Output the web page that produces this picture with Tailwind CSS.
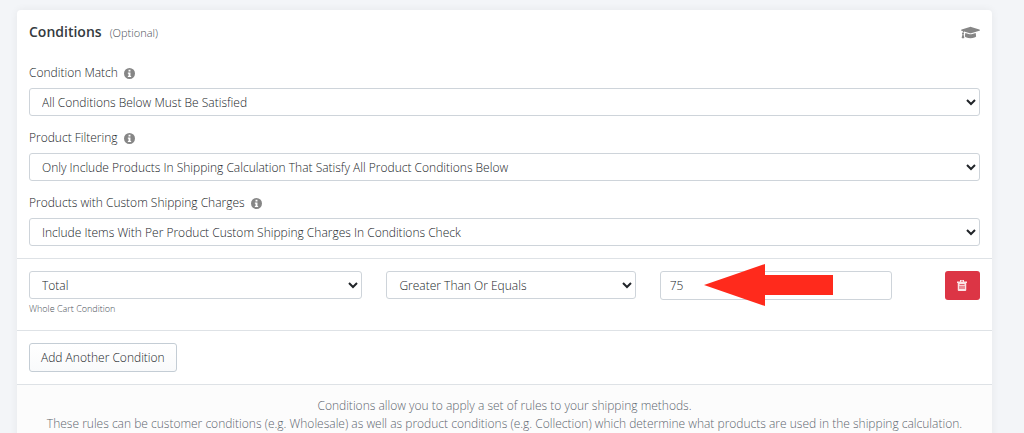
<!DOCTYPE html>
<html lang="en">
  <head>
    <meta charset="UTF-8" />
    <meta name="viewport" content="width=device-width, initial-scale=1.0" />
    <title>Shipping Rate - Conditions</title>
    <script src="https://cdn.jsdelivr.net/npm/@tailwindcss/browser@4"></script>
  </head>
  <body class="bg-[#f3f5f8] font-['Open_Sans','Noto_Sans',sans-serif] font-light text-[12px] leading-[18px] text-[#212529] overflow-hidden">
    <main class="pt-[10px] pl-[17px] pr-8">
      <section class="bg-white rounded-t shadow-[0_0_8px_rgba(0,0,0,0.06)]">
        <!-- Header -->
        <header class="flex items-center justify-between px-3 pt-3">
          <div class="flex items-baseline gap-2">
            <h2 class="text-[14px] leading-5 font-semibold text-[#343a40]">Conditions</h2>
            <span class="text-[11px] text-[#495057]">(Optional)</span>
          </div>
          <a href="#" aria-label="Documentation" class="text-[#868686]">
            <svg class="w-[19px] h-[15px]" viewBox="0 0 640 512" fill="currentColor" aria-hidden="true">
              <path d="M622 153 343 67a80 80 0 0 0-46 0L18 153c-24 7-24 39 0 46l49 15c-11 13-17 29-18 47a32 32 0 0 0-3 53L20 428c-2 10 6 20 16 20h56c10 0 18-10 16-20L82 314a32 32 0 0 0-1-52c1-16 9-29 22-38l194 60c11 3 28 6 46 0l279-85c24-7 24-39 0-46zM353 315c-28 8-51 4-66 0l-145-45-14 114c0 35 86 64 192 64s192-29 192-64l-14-114z" />
            </svg>
          </a>
        </header>

        <!-- Match settings -->
        <div class="flex flex-col gap-[13px] px-3 pt-[22px] pb-3">
          <div>
            <div class="flex items-center gap-[6px] mb-[6px]">
              <label for="condition-match">Condition Match</label>
              <svg class="w-[11px] h-[11px] text-[#868686]" viewBox="0 0 16 16" fill="currentColor" aria-hidden="true">
                <path fill-rule="evenodd" d="M8 0a8 8 0 1 1 0 16A8 8 0 0 1 8 0zM6.6 2.6v2.6h2.8V2.6zM5.6 6.6v1.6h1v3.4h-1v1.6h4.8v-1.6h-1v-5z" />
              </svg>
            </div>
            <select id="condition-match" class="block w-full h-7 px-2 bg-white border border-[#ced4da] rounded-[3px]">
              <option>All Conditions Below Must Be Satisfied</option>
            </select>
          </div>
          <div>
            <div class="flex items-center gap-[6px] mb-[6px]">
              <label for="product-filtering">Product Filtering</label>
              <svg class="w-[11px] h-[11px] text-[#868686]" viewBox="0 0 16 16" fill="currentColor" aria-hidden="true">
                <path fill-rule="evenodd" d="M8 0a8 8 0 1 1 0 16A8 8 0 0 1 8 0zM6.6 2.6v2.6h2.8V2.6zM5.6 6.6v1.6h1v3.4h-1v1.6h4.8v-1.6h-1v-5z" />
              </svg>
            </div>
            <select id="product-filtering" class="block w-full h-7 px-2 bg-white border border-[#ced4da] rounded-[3px]">
              <option>Only Include Products In Shipping Calculation That Satisfy All Product Conditions Below</option>
            </select>
          </div>
          <div>
            <div class="flex items-center gap-[6px] mb-[6px]">
              <label for="custom-charges">Products with Custom Shipping Charges</label>
              <svg class="w-[11px] h-[11px] text-[#868686]" viewBox="0 0 16 16" fill="currentColor" aria-hidden="true">
                <path fill-rule="evenodd" d="M8 0a8 8 0 1 1 0 16A8 8 0 0 1 8 0zM6.6 2.6v2.6h2.8V2.6zM5.6 6.6v1.6h1v3.4h-1v1.6h4.8v-1.6h-1v-5z" />
              </svg>
            </div>
            <select id="custom-charges" class="block w-full h-7 px-2 bg-white border border-[#ced4da] rounded-[3px]">
              <option>Include Items With Per Product Custom Shipping Charges In Conditions Check</option>
            </select>
          </div>
        </div>

        <!-- Condition row -->
        <div class="grid grid-cols-[333fr_249fr_232fr_64px] gap-6 items-start px-3 pt-3 pb-3 border-t border-[#dee2e6]">
          <div>
            <select id="condition-type" aria-label="Condition" aria-describedby="condition-help" class="block w-full h-7 px-2 bg-white border border-[#ced4da] rounded-[3px]">
              <option>Total</option>
            </select>
            <p id="condition-help" class="pt-px text-[9px] text-[#495057]">Whole Cart Condition</p>
          </div>
          <select aria-label="Operator" class="block w-full h-7 px-2 bg-white border border-[#ced4da] rounded-[3px]">
            <option>Greater Than Or Equals</option>
          </select>
          <div class="relative">
            <input type="text" value="75" aria-label="Value" class="block w-full h-[29px] px-[9px] bg-white border border-[#ced4da] rounded-[3px]" />
            <!-- Arrow pointing at the value -->
            <svg class="absolute left-11 -top-[7px] w-[129px] h-[42px] pointer-events-none" viewBox="0 0 129 42" fill="#ff2a1c" aria-hidden="true">
              <path d="M0 21 61 0v11h68v20H61v11z" />
            </svg>
          </div>
          <button type="button" aria-label="Delete condition" class="justify-self-end flex items-center justify-center w-[35px] h-[29px] bg-[#dc3545] rounded-[3px] text-[#fbe3e5]">
            <svg class="w-[10px] h-[11px]" viewBox="0 0 20 22" fill="currentColor" aria-hidden="true">
              <path fill-rule="evenodd" d="M6 0h8v3h6v3h-1.500v14a2 2 0 0 1-2 2h-13a2 2 0 0 1-2-2V6H0V3h6zM8 1.600V3h4V1.600zM5 8v1.600h10V8zM5 11.500V18h2v-6.500zM9 11.500V18h2v-6.500zM13 11.500V18h2v-6.500z" />
            </svg>
          </button>
        </div>

        <div class="px-3 py-3 border-t border-[#dee2e6]">
          <button type="button" class="block h-[29px] px-[11px] bg-linear-to-b from-white to-[#f9fafb] border border-[#c4cdd5] rounded-[3px] text-[#212529]">Add Another Condition</button>
        </div>

        <!-- Help text -->
        <footer class="px-3 pt-3 pb-5 border-t border-[#dee2e6] bg-[#fcfcfc] text-center text-[#5c666f]">
          <p>Conditions allow you to apply a set of rules to your shipping methods.</p>
          <p>These rules can be customer conditions (e.g. Wholesale) as well as product conditions (e.g. Collection) which determine what products are used in the shipping calculation.</p>
        </footer>
      </section>
    </main>
  </body>
</html>
